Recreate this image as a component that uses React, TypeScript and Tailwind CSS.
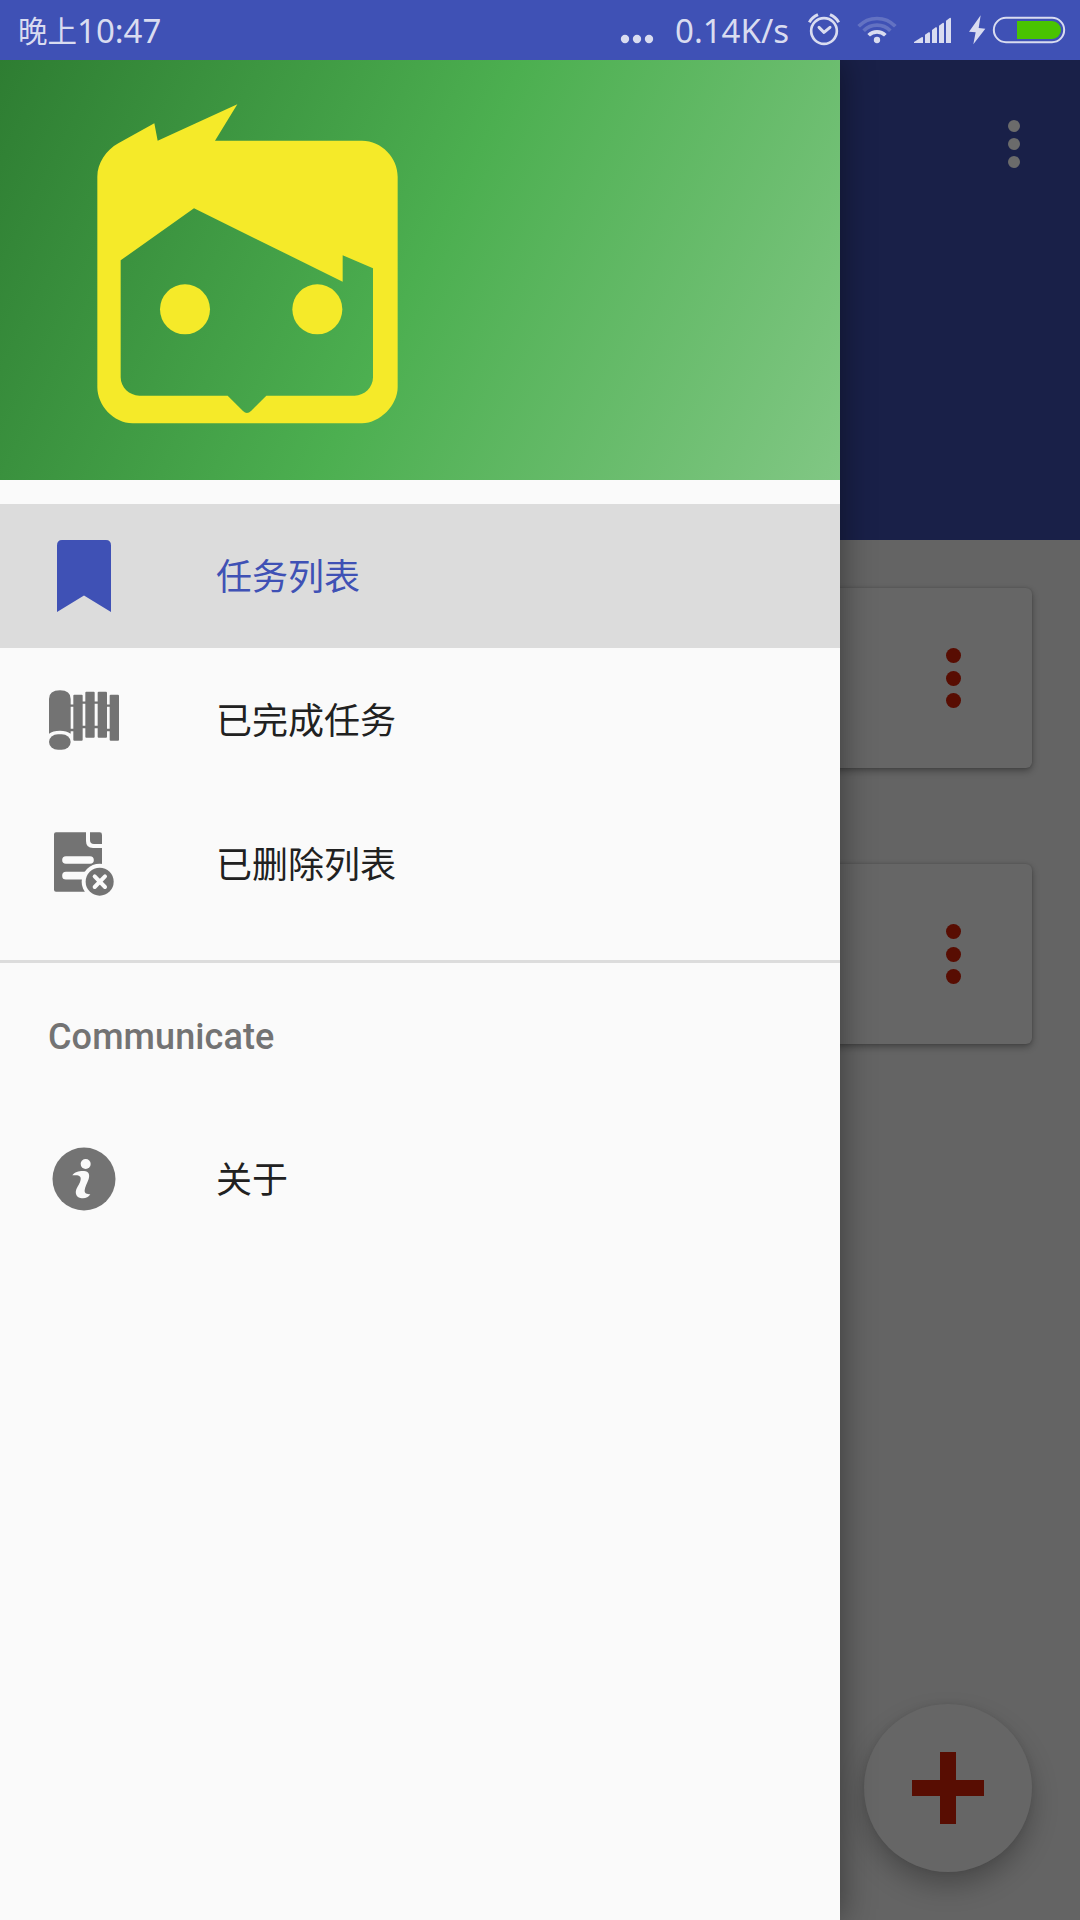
import type { ReactNode } from "react";

const INK = "#d9dcf0";

function StatusBar() {
  return (
    <header className="flex h-[60px] items-center bg-[#3f51b5] text-[#d9dcf0]">
      <div className="flex h-[60px] items-center pl-[18px] leading-[56px] whitespace-nowrap">
        <span className="pb-[2px] font-['Noto_Sans_CJK_SC',sans-serif] text-[29.5px]">晚上</span>
        <span className="pt-[2px] font-['Noto_Sans','Noto_Sans_CJK_SC',sans-serif] text-[33px]">10:47</span>
      </div>
      <div className="ml-auto flex h-[60px] items-center pr-[14px]">
        <svg className="h-[60px] w-[34px]" viewBox="60 0 102 180" fill={INK}>
          <circle cx="75" cy="117" r="12.5" />
          <circle cx="111" cy="117" r="12.5" />
          <circle cx="147" cy="117" r="12.5" />
        </svg>
        <span className="ml-[21px] w-[117px] pt-[2px] font-['Noto_Sans',sans-serif] text-[33px] leading-[56px] whitespace-nowrap">
          0.14K/s
        </span>
        <svg className="ml-[14px] h-[60px] w-9" viewBox="18 0 108 180" fill="none" stroke={INK}>
          <circle cx="72" cy="93" r="38.5" strokeWidth="8" />
          <path d="M57 82 L72 97 L90 82" strokeWidth="9" strokeLinecap="round" strokeLinejoin="round" />
          <path d="M28 67 Q36 52 54 44 M116 67 Q108 52 90 44" strokeWidth="9" />
        </svg>
        <svg className="ml-[14px] h-[60px] w-[42px]" viewBox="168 0 126 180" fill="none" stroke={INK}>
          <path d="M176 79 A76 76 0 0 1 286 79" strokeWidth="11" opacity="0.24" />
          <path d="M191 92 A56 56 0 0 1 271 92" strokeWidth="11" opacity="0.24" />
          <path d="M206 106 A35 35 0 0 1 256 106" strokeWidth="11" />
          <circle cx="231" cy="120" r="9.5" fill={INK} stroke="none" />
        </svg>
        <svg className="ml-[14px] h-[60px] w-10" viewBox="336 0 120 180" fill={INK}>
          <path d="M342 129V126L366 111Q369 110 369 114V129Z" />
          <path d="M375 129V104L386 97Q390 95 390 100V129Z" />
          <path d="M396 129V90L407 82Q411 80 411 85V129Z" />
          <path d="M417 129V77L428 69Q432 67 432 72V129Z" />
          <path d="M438 129V62L449 54Q453 52 453 57V129Z" />
        </svg>
        <svg className="ml-4 h-[60px] w-[18px]" viewBox="504 0 54 180" fill={INK}>
          <path d="M542 46 L507 95 L527 97 L520 133 L556 86 L536 84 Z" />
        </svg>
        <svg className="ml-[6px] h-[60px] w-[74px]" viewBox="576 0 222 180">
          <rect x="581.5" y="53.5" width="211" height="73" rx="36.5" fill="none" stroke={INK} strokeWidth="6" />
          <path d="M651 63H756A27 27 0 0 1 756 117H651Z" fill="#49c400" />
        </svg>
      </div>
    </header>
  );
}

function Kebab({ className, dot }: { className: string; dot: string }) {
  return (
    <div className={`flex flex-col items-center ${className}`}>
      <span className={`rounded-full ${dot}`} />
      <span className={`rounded-full ${dot}`} />
      <span className={`rounded-full ${dot}`} />
    </div>
  );
}

function TaskCard() {
  return (
    <div className="flex h-[180px] items-center justify-end rounded-[6px] bg-[#666666] pr-[70.7px] shadow-[0_3px_7px_rgba(0,0,0,0.32),0_0_3px_rgba(0,0,0,0.16)]">
      <Kebab className="gap-[7.6px]" dot="size-[15px] bg-[#580d02]" />
    </div>
  );
}

function LogoMark() {
  return (
    <svg className="h-[350px] w-[340px]" viewBox="0 0 1020 1050" fill="#f5ea29">
      <path
        fillRule="evenodd"
        d="M52 260C52 220 78 180 115 160L223 100L233 152L472 43L405 152H846C905 152 953 203 953 260V892C953 945 900 1000 846 1000H158C100 1000 52 945 52 892ZM122 511V862C122 892 148 917 178 917H443L489 963Q501 975 513 963L559 917H824C854 917 879 892 879 862V535L788 496V575L342 355Z"
      />
      <circle cx="315" cy="658" r="75" />
      <circle cx="712" cy="658" r="75" />
    </svg>
  );
}

function BookmarkIcon() {
  return (
    <svg className="size-[72px]" viewBox="0 0 72 72" fill="#3f51b5">
      <path d="M9 5.500Q9 0 14 0H58Q63 0 63 5.500V72L36 55.500L9 72Z" />
    </svg>
  );
}

function ScrollIcon() {
  return (
    <svg className="size-[72px]" viewBox="0 17 216 216" fill="#737373">
      <path d="M3 62Q3 36 36 36Q68 36 68 62V166Q56 157 36 157Q14 157 3 166Z" />
      <rect x="3" y="168" width="65" height="46" rx="27" ry="23" />
      <rect x="76" y="49" width="28" height="138" rx="3" />
      <rect x="112" y="40" width="28" height="138" rx="3" />
      <rect x="149" y="40" width="28" height="138" rx="3" />
      <rect x="185" y="49" width="28" height="138" rx="3" />
      <path
        d="M66 82H78M102 73H114M138 73H151M175 82H187M66 155H78M102 146H114M138 146H151M175 155H187"
        stroke="#737373"
        strokeWidth="7"
      />
    </svg>
  );
}

function DeletedListIcon() {
  return (
    <svg className="size-[72px]" viewBox="0 18 216 216">
      <path d="M24 31H114V57Q114 78 135 78H162V209H24Q18 209 18 203V37Q18 31 24 31Z" fill="#737373" />
      <path d="M126 31H155Q162 31 162 38V66H138Q126 66 126 54Z" fill="#737373" />
      <path d="M54 114H126M54 161H110" stroke="#fafafa" strokeWidth="23" strokeLinecap="round" />
      <circle cx="155" cy="179" r="54" fill="#fafafa" />
      <circle cx="155" cy="179" r="42" fill="#737373" />
      <path d="M140 163L171 195M171 163L140 195" stroke="#fafafa" strokeWidth="12" strokeLinecap="round" />
    </svg>
  );
}

function AboutIcon() {
  return (
    <svg className="size-[72px]" viewBox="0 0 216 216">
      <circle cx="108" cy="108" r="94.500" fill="#737373" />
      <circle cx="113" cy="63" r="15" fill="#fafafa" />
      <path
        d="M73 97C80 86 96 83 108 84C123 85 126 95 122 108C117 122 111 131 110 142C109 152 117 154 127 154C121 165 108 168 97 165C84 162 81 150 85 139C91 126 99 117 98 105C97 96 84 96 73 97Z"
        fill="#fafafa"
      />
    </svg>
  );
}

function DrawerItem({ icon, label, selected = false }: { icon: ReactNode; label: string; selected?: boolean }) {
  return (
    <li className={`flex h-36 items-center px-12 ${selected ? "bg-[#dcdcdc] text-[#3f51b5]" : "text-[#212121]"}`}>
      {icon}
      <span className="ml-24 pt-1 text-[36px] leading-[52px]">{label}</span>
    </li>
  );
}

function Drawer() {
  return (
    <aside className="absolute inset-y-0 left-0 w-[840px] bg-[#fafafa] font-[Roboto,'Noto_Sans_CJK_SC',sans-serif] shadow-[0_0_32px_rgba(0,0,0,0.45)]">
      <div className="h-[420px] bg-[linear-gradient(116.565deg,#2e7d32,#4caf50,#81c784)] pt-[30px] pl-20">
        <LogoMark />
      </div>
      <ul className="py-6">
        <DrawerItem icon={<BookmarkIcon />} label="任务列表" selected />
        <DrawerItem icon={<ScrollIcon />} label="已完成任务" />
        <DrawerItem icon={<DeletedListIcon />} label="已删除列表" />
      </ul>
      <div className="h-[3px] bg-[#dcdcdc]" />
      <h2 className="flex h-36 items-center px-12 pt-[3px] text-[36px] font-medium tracking-[0.1px] text-[#737373]">
        Communicate
      </h2>
      <ul>
        <DrawerItem icon={<AboutIcon />} label="关于" />
      </ul>
    </aside>
  );
}

export default function App() {
  return (
    <div className="flex h-[1920px] w-[1080px] flex-col overflow-hidden">
      <StatusBar />
      <div className="relative flex-1 overflow-hidden bg-[#646464]">
        <div className="flex h-[480px] justify-end bg-[#192048] pt-[60px] pr-[60px]">
          <Kebab className="gap-[6px]" dot="size-3 bg-[#6b6b6b]" />
        </div>
        <main className="flex flex-col gap-24 p-12">
          <TaskCard />
          <TaskCard />
        </main>
        <button
          aria-label="Add task"
          className="absolute right-12 bottom-12 flex size-[168px] items-center justify-center rounded-full bg-[#666666] shadow-[0_14px_26px_rgba(0,0,0,0.25),0_0_6px_rgba(0,0,0,0.08)]"
        >
          <svg className="size-[72px]" viewBox="0 0 72 72" fill="#580d02">
            <path d="M28 0H44V28H72V44H44V72H28V44H0V28H28Z" />
          </svg>
        </button>
        <Drawer />
      </div>
    </div>
  );
}
